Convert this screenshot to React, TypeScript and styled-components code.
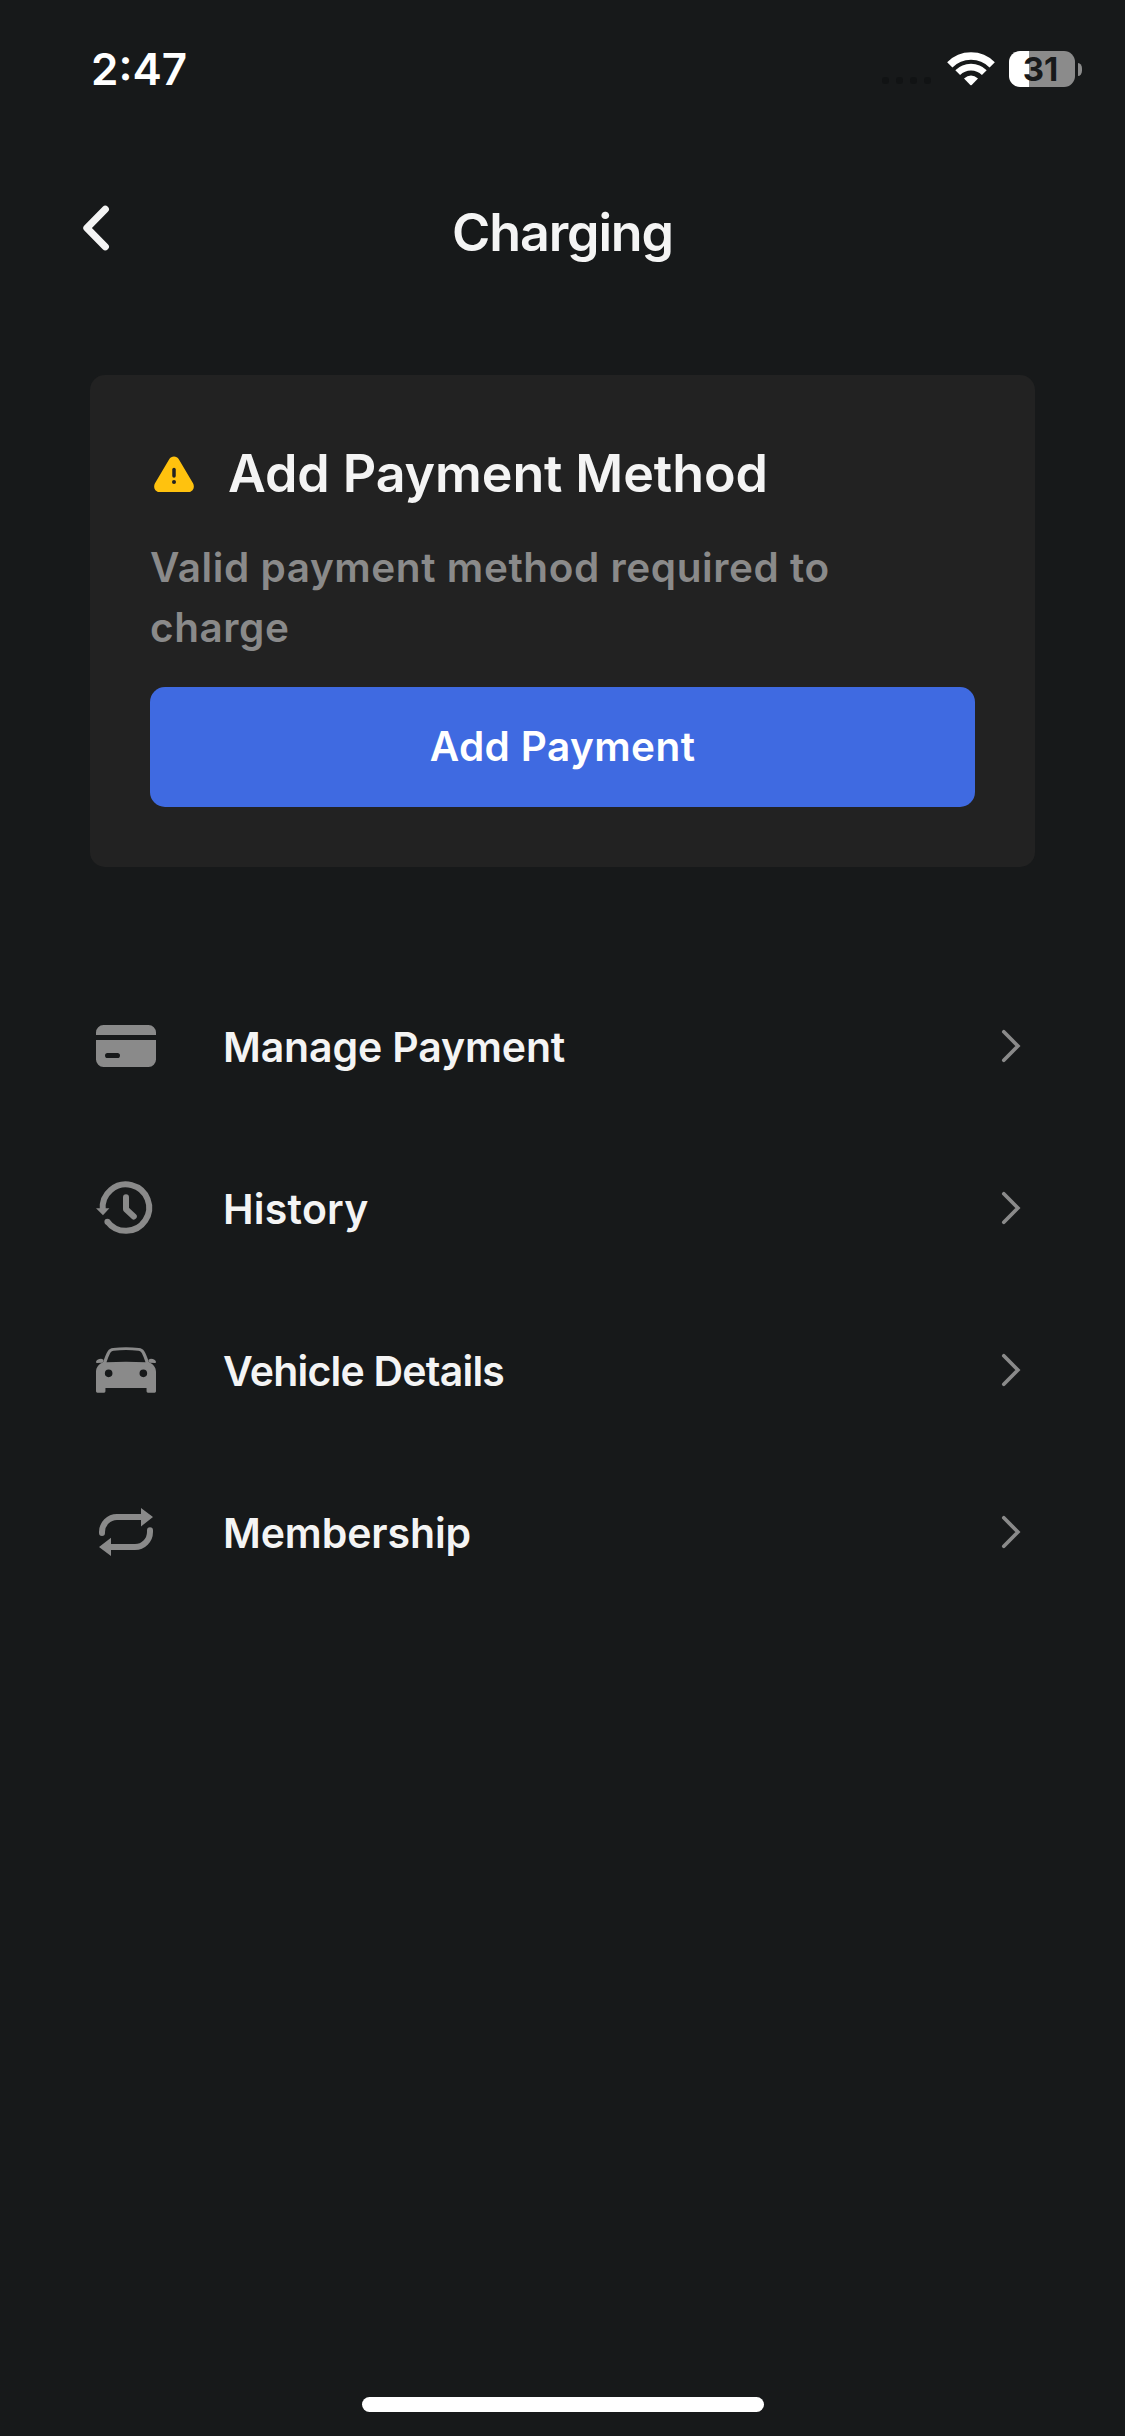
import React from "react";
import styled, { createGlobalStyle } from "styled-components";

const ink = "#17191a";
const paper = "#f4f4f4";
const muted = "#8a8a8a";

const GlobalStyle = createGlobalStyle`
  *, *::before, *::after { box-sizing: border-box; }
  body { margin: 0; background: ${ink}; }
  h1, h2, p, ul { margin: 0; padding: 0; }
  button { border: 0; padding: 0; background: none; font: inherit; color: inherit; }
  svg { display: block; flex: none; }
`;

const Screen = styled.div`
  width: 1125px;
  height: 2436px;
  display: flex;
  flex-direction: column;
  background: ${ink};
  color: ${paper};
  font-family: Inter, "Liberation Sans", sans-serif;
  font-weight: 600;
  overflow: hidden;
`;

const StatusBar = styled.div`
  height: 138px;
  padding: 0 43px 0 91px;
  display: flex;
  align-items: center;
  justify-content: space-between;
`;

const Time = styled.span<{ $track: number }>`
  font-size: 44px;
  line-height: 60px;
  color: #fff;
  letter-spacing: ${(p) => p.$track}px;
`;

const StatusIcons = styled.div`
  display: flex;
  align-items: center;
`;

const SignalDots = styled.div`
  display: flex;
  gap: 7px;
  padding-top: 22px;
  margin-right: 16px;
`;

const Dot = styled.i`
  width: 7px;
  height: 7px;
  border-radius: 3px;
  background: #111314;
`;

const Battery = styled.div`
  width: 66px;
  height: 36px;
  margin-left: 14px;
  border-radius: 11px;
  display: flex;
  align-items: center;
  justify-content: center;
  padding-right: 3px;
  background: linear-gradient(to right, #fff 20px, #8b8b8b 20px);
  color: ${ink};
  font-size: 33px;
  line-height: 36px;
  font-weight: 700;
`;

const BatteryCap = styled.i`
  width: 4.5px;
  height: 13px;
  margin-left: 2.5px;
  border-radius: 0 5px 5px 0 / 0 6.5px 6.5px 0;
  background: #8b8b8b;
`;

const Header = styled.header`
  height: 237px;
  padding: 58px 78px 0;
  display: grid;
  grid-template-columns: 80px 1fr 80px;
  align-items: start;
`;

const BackButton = styled.button`
  width: 40px;
  height: 64px;
  display: flex;
  align-items: center;
`;

const Title = styled.h1<{ $track: number }>`
  font-size: 52px;
  line-height: 74px;
  font-weight: 600;
  text-align: center;
  letter-spacing: ${(p) => p.$track}px;
`;

const Card = styled.section`
  height: 492px;
  margin: 0 90px;
  padding: 60px;
  border-radius: 15px;
  background: #222222;
`;

const CardHeading = styled.div`
  height: 76px;
  display: flex;
  align-items: center;
  gap: 33px;
  padding: 2px 0 0 3px;
`;

const CardTitle = styled.h2<{ $track: number }>`
  font-size: 52px;
  line-height: 74px;
  font-weight: 600;
  letter-spacing: ${(p) => p.$track}px;
  white-space: nowrap;
`;

const Note = styled.p<{ $track: number }>`
  margin-top: 27px;
  width: 740px;
  font-size: 40.5px;
  line-height: 60px;
  color: ${muted};
  letter-spacing: ${(p) => p.$track}px;
`;

const PrimaryButton = styled.button<{ $track: number }>`
  display: block;
  width: 100%;
  height: 120px;
  margin-top: 29px;
  padding-bottom: 1px;
  border-radius: 15px;
  background: #3f6ae1;
  color: #fff;
  font-size: 40.5px;
  font-weight: 600;
  text-align: center;
  letter-spacing: ${(p) => p.$track}px;
`;

const Menu = styled.ul`
  margin: 98px 90px 0;
  list-style: none;
  flex: 1;
`;

const MenuRow = styled.li`
  height: 162px;
  padding-right: 12px;
  display: flex;
  align-items: center;
`;

const MenuLabel = styled.span<{ $track: number }>`
  flex: 1;
  margin-left: 61px;
  padding-top: 1px;
  font-size: 41px;
  line-height: 60px;
  letter-spacing: ${(p) => p.$track}px;
`;

const HomeIndicator = styled.div`
  width: 402px;
  height: 15px;
  margin: 0 auto 24px 362px;
  border-radius: 8px;
  background: #fff;
`;

const Icon = ({ children }: { children: React.ReactNode }) => (
  <svg width="72" height="72" viewBox="0 0 24 24" fill={muted}>
    {children}
  </svg>
);

const CardIcon = () => (
  <Icon>
    <path d="M4.5 5h15A2.5 2.5 0 0 1 22 7.5v.85H2V7.5A2.5 2.5 0 0 1 4.5 5z" />
    <path
      fillRule="evenodd"
      d="M2 10h20v6.5a2.5 2.5 0 0 1-2.5 2.5h-15A2.5 2.5 0 0 1 2 16.500zM5.850 14.300a.85.85 0 0 0 0 1.700h3.300a.85.85 0 0 0 0-1.700z"
    />
  </Icon>
);

const HistoryIcon = () => (
  <Icon>
    <g fill="none" stroke={muted} strokeWidth="2">
      <path d="M4.250 12.600A7.750 7.750 0 1 1 5.750 16.500" />
      <path d="M12 8.400v4l2.600 2.450" strokeLinecap="round" strokeLinejoin="round" />
    </g>
    <circle cx="5.800" cy="16.550" r="1" />
    <path d="M2 12.100h4.450L4.330 14.450z" />
  </Icon>
);

const CarIcon = () => (
  <Icon>
    <path
      fillRule="evenodd"
      d="M4.350 9.400C5 7.700 5.400 6.500 5.950 5.700C6.350 5.100 6.900 4.800 7.700 4.700C10.500 4.300 13.500 4.300 16.300 4.700C17.100 4.800 17.650 5.100 18.050 5.700C18.600 6.500 19 7.700 19.650 9.400C21 10 22 11 22 12.600V19.100Q22 19.550 21.550 19.550H19.300Q18.850 19.550 18.850 19.100V18H5.150V19.100Q5.150 19.550 4.700 19.550H2.450Q2 19.550 2 19.100V12.600C2 11 3 10 4.350 9.400zM5.500 9.450Q12 9 18.500 9.450C18.100 8.200 17.700 7.200 17.300 6.400C17 5.850 16.700 5.650 16.100 5.550C13.400 5.250 10.600 5.250 7.900 5.550C7.300 5.650 7 5.850 6.700 6.400C6.300 7.200 5.900 8.200 5.500 9.450zM6.220 11.850a1.270 1.270 0 1 0 0 2.540a1.270 1.270 0 0 0 0-2.540zM17.780 11.850a1.270 1.270 0 1 0 0 2.540a1.270 1.270 0 0 0 0-2.540z"
    />
    <path d="M2 9.300C2 8.700 2.800 8.250 3.700 8.250Q4.350 8.300 4.550 8.700L4.200 9.550L2.300 9.700Q2 9.650 2 9.300zM22 9.300C22 8.700 21.200 8.250 20.300 8.250Q19.650 8.300 19.450 8.700L19.800 9.550L21.700 9.700Q22 9.650 22 9.300z" />
  </Icon>
);

const RepeatIcon = () => (
  <Icon>
    <g fill="none" stroke={muted} strokeWidth="2" strokeLinecap="round">
      <path d="M4 12.350V12a5 5 0 0 1 5-5h8.500" />
      <path d="M20 11.450V12a5 5 0 0 1-5 5H6.500" />
    </g>
    <path d="M17 4L21 7L17 10.150zM7 13.900L3 17L7 20z" />
  </Icon>
);

const Chevron = () => (
  <svg width="24" height="40" viewBox="0 0 24 40" fill="none" stroke={muted} strokeWidth="3.700" strokeLinecap="round">
    <path d="M4.800 5.800L18.900 20L4.800 34.200" />
  </svg>
);

const BackIcon = () => (
  <svg width="40" height="64" viewBox="0 0 40 64" fill="none" stroke={paper} strokeWidth="7.200" strokeLinecap="round" strokeLinejoin="round">
    <path d="M27.300 13.300L8.900 32L27.300 50.700" />
  </svg>
);

const WarningIcon = () => (
  <svg width="42" height="38" viewBox="0 0 42 38">
    <path
      d="M16.200 4.200C18.200 .5 23.800 .5 25.800 4.200L40 28.200C42.200 32.200 39.900 37 35.300 37H6.700C2.100 37-.2 32.200 2 28.200z"
      fill="#ffc20e"
    />
    <path d="M21 14.500v6.500" stroke="#222222" strokeWidth="3.500" strokeLinecap="round" />
    <circle cx="21" cy="27" r="2" fill="#222222" />
  </svg>
);

const WifiIcon = () => (
  <svg width="48" height="36" viewBox="0 0 48 36">
    <g fill="none" stroke="#fff">
      <path d="M2.800 13.800A29.800 29.800 0 0 1 45.200 13.800" strokeWidth="7.400" />
      <path d="M10.700 21.700A18.700 18.700 0 0 1 37.300 21.700" strokeWidth="6.700" />
    </g>
    <path d="M17 27.400Q24 21.600 31 27.400L24.700 33.900Q24 34.500 23.300 33.900z" fill="#fff" />
  </svg>
);

const rows = [
  { label: "Manage Payment", icon: CardIcon, track: -0.13 },
  { label: "History", icon: HistoryIcon, track: 0.25 },
  { label: "Vehicle Details", icon: CarIcon, track: -0.78 },
  { label: "Membership", icon: RepeatIcon, track: -0.1 },
];

export default function App() {
  return (
    <>
      <GlobalStyle />
      <Screen>
        <StatusBar>
          <Time $track={0}>2:47</Time>
          <StatusIcons>
            <SignalDots>
              <Dot />
              <Dot />
              <Dot />
              <Dot />
            </SignalDots>
            <WifiIcon />
            <Battery>31</Battery>
            <BatteryCap />
          </StatusIcons>
        </StatusBar>
        <Header>
          <BackButton aria-label="Back">
            <BackIcon />
          </BackButton>
          <Title $track={-1.15}>Charging</Title>
        </Header>
        <Card>
          <CardHeading>
            <WarningIcon />
            <CardTitle $track={-0.1}>Add Payment Method</CardTitle>
          </CardHeading>
          <Note $track={0.57}>Valid payment method required to charge</Note>
          <PrimaryButton $track={0.4}>Add Payment</PrimaryButton>
        </Card>
        <Menu>
          {rows.map(({ label, icon: Glyph, track }) => (
            <MenuRow key={label}>
              <Glyph />
              <MenuLabel $track={track}>{label}</MenuLabel>
              <Chevron />
            </MenuRow>
          ))}
        </Menu>
        <HomeIndicator />
      </Screen>
    </>
  );
}
